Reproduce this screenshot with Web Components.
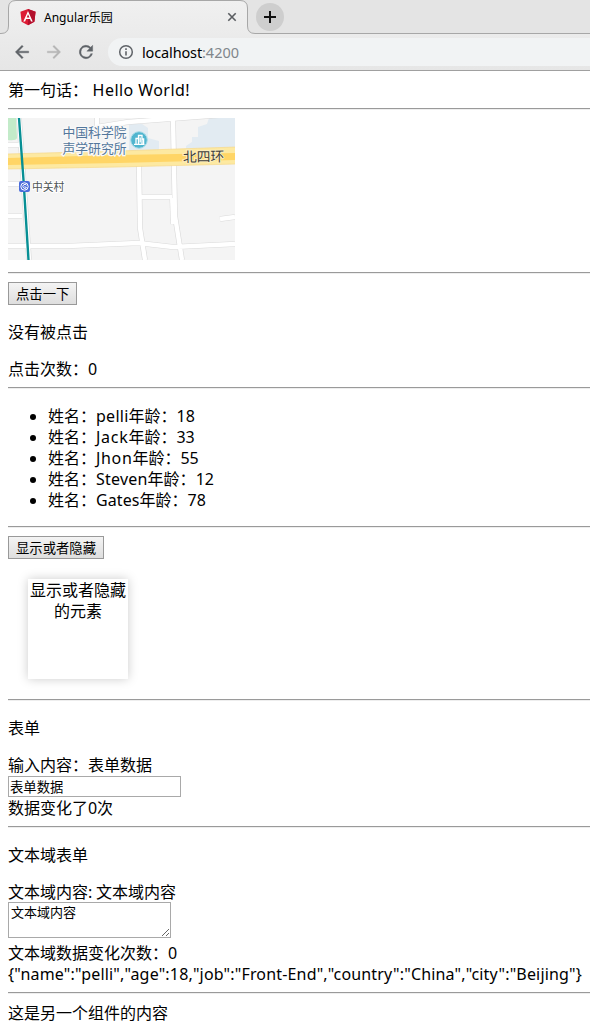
<!DOCTYPE html>
<html lang="zh">
<head>
<meta charset="utf-8">
<title>Angular乐园</title>
<style>
html,body{margin:0;background:#fff;color:#000;overflow:hidden}
body{font:16px/21px "Noto Sans","Noto Sans CJK SC",sans-serif}
</style>
</head>
<body>
<browser-chrome></browser-chrome>
<demo-page></demo-page>
<script>
const define=(name,html,ready)=>customElements.define(name,class extends HTMLElement{
  connectedCallback(){
    if(this.shadowRoot)return;
    const t=document.createElement('template');t.innerHTML=html;
    this.attachShadow({mode:'open'}).append(t.content.cloneNode(true));
    if(ready)ready(this);
  }
});

/* Latin run that occupies a given advance width */
define('latin-run',`<style>:host{display:inline-block;white-space:pre;height:21px;vertical-align:top}</style><span><slot></slot></span>`,el=>{
  const s=el.shadowRoot.querySelector('span'),w=+el.getAttribute('w'),n=el.textContent.length;
  s.style.letterSpacing=((w-s.getBoundingClientRect().width)/n)+'px';
  el.style.width=w+'px';
});

define('browser-tab',`<style>
:host{display:flex;align-items:center;width:218px;height:34px;margin-left:20px;font-size:12px;line-height:16px}
svg{flex:none}.t{margin-left:8px;flex:1;padding-top:1px}.x{margin-right:1px}
</style>
<svg width="16" height="18" viewBox="0 0 16 18"><path fill="#dd1b34" d="M8 1 15.6 3.7 14.4 13.7 8 17.3 1.6 13.7.4 3.7z"/><path fill="#b3102d" d="M8 1 15.6 3.7 14.4 13.7 8 17.3z"/><path fill="#fff" fill-rule="evenodd" d="M8 2.9 3.3 13.4h1.8l1-2.4h3.9l1 2.4h1.7zM8 6.2 9.4 9.5H6.7z"/></svg>
<span class="t"><slot></slot></span>
<svg class="x" width="10" height="10" viewBox="0 0 10 10"><path d="M1.3 1.3 8.7 8.7M8.7 1.3 1.3 8.7" stroke="#5a5d61" stroke-width="1.6"/></svg>`);

define('nav-bar',`<style>
:host{display:flex;align-items:center;height:36px;padding-left:12px;background:linear-gradient(#ebebeb,#e6e6e6);border-bottom:1px solid #a0a0a0}
svg{display:block;flex:none}.r{margin-left:12px}
.pill{display:flex;align-items:center;flex:1;height:28px;margin-left:12px;padding-left:8px;border-radius:14px 0 0 14px;background:#f1f3f4;font-size:14.5px;line-height:20px}
.u{margin-left:6px}.p{color:#80868b}
</style>
<svg width="20" height="20" viewBox="0 0 24 24"><path fill="#5f6368" d="M20 11H7.8l5.6-5.6L12 4l-8 8 8 8 1.4-1.4L7.8 13H20z" stroke="#5f6368" stroke-width=".5"/></svg>
<svg class="r" width="20" height="20" viewBox="0 0 24 24"><path fill="#b5b5b5" d="m12 4-1.4 1.4 5.6 5.6H4v2h12.2l-5.6 5.6L12 20l8-8z" stroke="#b5b5b5" stroke-width=".4"/></svg>
<svg class="r" width="20" height="20" viewBox="0 0 24 24"><path fill="#5f6368" stroke="#5f6368" stroke-width=".5" d="M17.65 6.35A8 8 0 1 0 19.73 14h-2.08A6 6 0 1 1 12 6c1.66 0 3.14.69 4.22 1.78L13 11h7V4z"/></svg>
<div class="pill">
<svg width="20" height="20" viewBox="0 0 20 20"><circle cx="10" cy="10" r="6.3" fill="none" stroke="#5f6368" stroke-width="1.5"/><path stroke="#5f6368" stroke-width="1.6" d="M10 9.2v4.2M10 6.2v1.7"/></svg>
<span class="u"><latin-run w="60">localhost</latin-run><latin-run class="p" w="37">:4200</latin-run></span></div>`);

define('browser-chrome',`<style>
:host{display:block}
.strip{display:grid;height:34px;background:#e4e4e4}
.strip>*{grid-area:1/1}
.row{display:flex;align-items:center;z-index:1}
.plus{margin-left:18px;display:block}
</style>
<div class="strip">
<svg width="590" height="34"><defs><linearGradient id="g" x2="0" y2="1"><stop stop-color="#f0f0f0"/><stop offset="1" stop-color="#ebebeb"/></linearGradient></defs>
<path fill="url(#g)" stroke="#a7a7a7" d="M-2 33.5H1Q8.500 33.500 8.500 26V8Q8.500 .5 16 .5H240Q247.500 .5 247.500 8V26Q247.500 33.500 255 33.500H592V36H-2z"/></svg>
<div class="row"><browser-tab>Angular乐园</browser-tab><svg class="plus" width="28" height="28" viewBox="0 0 28 28"><circle cx="14" cy="14" r="14" fill="#cecece"/><path d="M14 8v12M8 14h12" stroke="#111" stroke-width="2"/></svg></div>
</div><nav-bar></nav-bar>`);

define('rule-line',`<style>:host{display:block;height:1px;margin:8px 0;background:#9a9a9a;border-bottom:1px solid #eee}</style>`);

define('push-button',`<style>:host{display:block;height:23px}
button{box-sizing:border-box;display:block;height:23px;margin:0;padding:0 7px;font:13.333px/19px "Noto Sans CJK SC",sans-serif;color:#000;border:1px solid #999;border-radius:0;background:linear-gradient(#f4f4f4,#dedede)}</style><button><slot></slot></button>`);

define('street-map',`<style>:host{display:block;height:146px}svg{display:block}text{font-family:"Noto Sans CJK SC",sans-serif}</style>
<svg width="227" height="142" viewBox="0 0 227 142"><rect width="227" height="142" fill="#f4f4f4"/>
<path fill="#c3ebc9" d="M0 0H8L9 20Q8 23 0 22z"/>
<path fill="#e2ebf2" d="M201 0H227V37H178V28L184 24V19H190V9L199 6zM121 6H134L140 10V20L151 23V33L121 37z"/>
<g fill="none" stroke="#dadada" stroke-width="5.600" stroke-linejoin="round"><path d="M11 0 15 55 21 142M0 27H12M0 66H14M0 98H14M0 128 60 128 130 125 165 129 227 126M165 0 166 50 167 98 174 142M131 46 132 110 137 142M131 79 164 79M89 0V9L120 4 227-4M212 101 227 99"/></g>
<path fill="none" stroke="#dadada" stroke-width="7" d="M165 80 166 106"/>
<g fill="none" stroke="#fff" stroke-width="4.400" stroke-linejoin="round"><path d="M11 0 15 55 21 142M0 27H12M0 66H14M0 98H14M0 128 60 128 130 125 165 129 227 126M165 0 166 50 167 98 174 142M131 46 132 110 137 142M131 79 164 79M89 0V9L120 4 227-4M212 101 227 99"/><path stroke-width="6" d="M165 80 166 106"/></g>
<path fill="#fde9a1" stroke="#f6d88b" stroke-width=".7" d="M-1 36 110 33 228 29V46L110 49-1 51z"/>
<path fill="#ffd566" d="M0 40 110 37 227 35V42L110 45 0 47z"/>
<path fill="none" stroke="#078f94" stroke-width="2.400" d="M11 0 15.500 62 20.500 142"/>
<text fill="#53779c" font-size="12.800" stroke="#f8f8f8" stroke-width="2.500" paint-order="stroke"><tspan x="54.500" y="18.500">中国科学院</tspan><tspan x="54.500" y="34.500">声学研究所</tspan></text>
<circle cx="131" cy="22" r="8.300" fill="#50b5cf" stroke="#a7dbe7"/><path fill="none" stroke="#fff" stroke-width="1.300" d="M126 26.400H136.500M128 26V20.500H130.500M130.500 26V17.500H134V26M134 21H135.600V26M132.200 19.500V24.500"/>
<text x="175" y="44" font-size="13.800" fill="#3e3e3e" stroke="#fbedbd" stroke-width="2" paint-order="stroke" transform="rotate(-1 175 44)">北四环</text>
<rect x="11" y="63" width="11" height="11" rx="2" fill="#4b6ddb"/><circle cx="16.500" cy="68.500" r="3.700" fill="none" stroke="#fff"/><path fill="none" stroke="#fff" d="M18.500 67.200A2 2 0 1 0 18.500 69.600L16.500 68.600"/>
<text x="24" y="72.600" font-size="10.800" fill="#4d5453" stroke="#fff" stroke-width="2" paint-order="stroke">中关村</text></svg>`);

define('person-list',`<style>ul{margin:16px 0;padding-left:40px;list-style:none}li{height:21px;line-height:23px;position:relative}
li::before{content:"";position:absolute;left:-18px;top:9px;width:6px;height:6px;border-radius:50%;background:#000}:host{display:block}</style>
<ul>${[['pelli',32.5,18],['Jack',32.4,33],['Jhon',36.4,55],['Steven',51.6,12],['Gates',43.5,78]].map(([n,w,a])=>`<li>姓名：<latin-run w="${w}">${n}</latin-run>年龄：<latin-run w="18.4">${a}</latin-run></li>`).join('')}</ul>`);

define('shadow-card',`<style>:host{box-sizing:border-box;display:block;width:100px;height:100px;margin:20px;padding-top:1px;text-align:center;background:#fff;box-shadow:0 0 10px #ccc}</style><slot></slot>`);

define('text-field',`<style>:host{display:block;box-sizing:border-box;height:22px;padding-top:1px}
input{box-sizing:border-box;display:block;width:173px;height:21px;margin:0;padding:0 1px;border:1px solid #a9a9a9;border-radius:0;font:13.333px/19px "Noto Sans CJK SC",sans-serif;color:#000}</style><input value="表单数据">`);

define('text-region',`<style>:host{display:block;height:40px}
textarea{box-sizing:border-box;display:block;width:163px;height:36px;margin:0;padding:1px 2px;border:1px solid #a9a9a9;border-radius:0;font:13px/15px "Noto Sans CJK SC",monospace;color:#000;overflow:hidden}</style><textarea>文本域内容</textarea>`);

define('demo-page',`<style>:host{display:block;padding:8px 0 0 8px;white-space:nowrap}
shadow-card{white-space:normal}
div,p{height:21px;line-height:23px}p{margin:16px 0}</style>
<div>第一句话：<latin-run w="102"> Hello World!</latin-run></div>
<rule-line></rule-line>
<street-map></street-map>
<rule-line></rule-line>
<push-button>点击一下</push-button>
<p>没有被点击</p>
<div>点击次数：<latin-run w="9">0</latin-run></div>
<rule-line></rule-line>
<person-list></person-list>
<rule-line></rule-line>
<push-button>显示或者隐藏</push-button>
<shadow-card>显示或者隐藏的元素</shadow-card>
<rule-line></rule-line>
<p>表单</p>
<div>输入内容：表单数据</div>
<text-field></text-field>
<div>数据变化了<latin-run w="9">0</latin-run>次</div>
<rule-line></rule-line>
<p>文本域表单</p>
<div>文本域内容<latin-run w="8">: </latin-run>文本域内容</div>
<text-region></text-region>
<div>文本域数据变化次数：<latin-run w="9">0</latin-run></div>
<div><latin-run w="574">{"name":"pelli","age":18,"job":"Front-End","country":"China","city":"Beijing"}</latin-run></div>
<rule-line></rule-line>
<div>这是另一个组件的内容</div>`);
</script>
</body>
</html>
